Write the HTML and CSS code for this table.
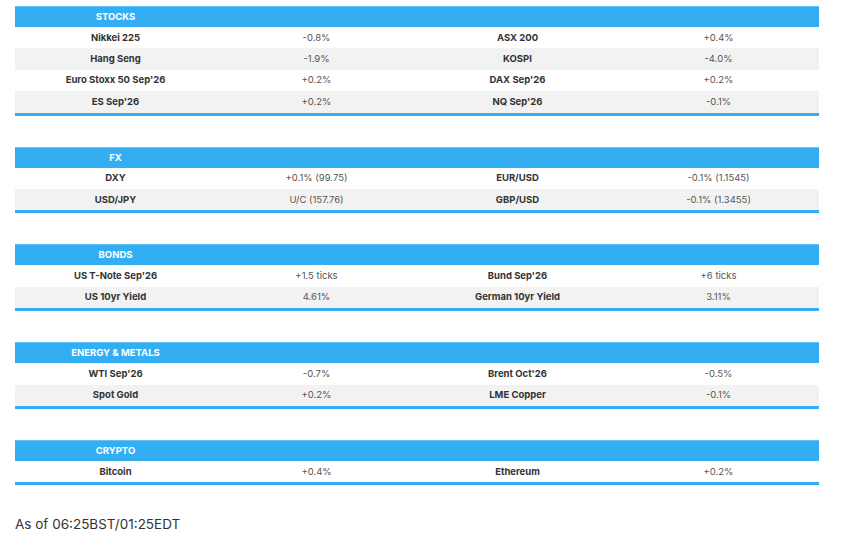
FILE: index.html
```html
<!DOCTYPE html>
<html>
<head>
<meta charset="utf-8">
<link rel="stylesheet" href="styles.css">
</head>
<body>
<div class="page">
  <table class="mkt">
    <tr class="head"><th>STOCKS</th><th></th><th></th><th></th></tr>
    <tr><td class="lbl">Nikkei 225</td><td class="val">-0.8%</td><td class="lbl">ASX 200</td><td class="val">+0.4%</td></tr>
    <tr class="alt"><td class="lbl">Hang Seng</td><td class="val">-1.9%</td><td class="lbl">KOSPI</td><td class="val">-4.0%</td></tr>
    <tr><td class="lbl">Euro Stoxx 50 Sep'26</td><td class="val">+0.2%</td><td class="lbl">DAX Sep'26</td><td class="val">+0.2%</td></tr>
    <tr class="alt last"><td class="lbl">ES Sep'26</td><td class="val">+0.2%</td><td class="lbl">NQ Sep'26</td><td class="val">-0.1%</td></tr>
  </table>

  <table class="mkt">
    <tr class="head"><th>FX</th><th></th><th></th><th></th></tr>
    <tr><td class="lbl">DXY</td><td class="val">+0.1% (99.75)</td><td class="lbl">EUR/USD</td><td class="val">-0.1% (1.1545)</td></tr>
    <tr class="alt last"><td class="lbl">USD/JPY</td><td class="val">U/C (157.76)</td><td class="lbl">GBP/USD</td><td class="val">-0.1% (1.3455)</td></tr>
  </table>

  <table class="mkt">
    <tr class="head"><th>BONDS</th><th></th><th></th><th></th></tr>
    <tr><td class="lbl">US T-Note Sep'26</td><td class="val">+1.5 ticks</td><td class="lbl">Bund Sep'26</td><td class="val">+6 ticks</td></tr>
    <tr class="alt last"><td class="lbl">US 10yr Yield</td><td class="val">4.61%</td><td class="lbl">German 10yr Yield</td><td class="val">3.11%</td></tr>
  </table>

  <table class="mkt">
    <tr class="head"><th>ENERGY &amp; METALS</th><th></th><th></th><th></th></tr>
    <tr><td class="lbl">WTI Sep'26</td><td class="val">-0.7%</td><td class="lbl">Brent Oct'26</td><td class="val">-0.5%</td></tr>
    <tr class="alt last"><td class="lbl">Spot Gold</td><td class="val">+0.2%</td><td class="lbl">LME Copper</td><td class="val">-0.1%</td></tr>
  </table>

  <table class="mkt">
    <tr class="head"><th>CRYPTO</th><th></th><th></th><th></th></tr>
    <tr class="last"><td class="lbl">Bitcoin</td><td class="val">+0.4%</td><td class="lbl">Ethereum</td><td class="val">+0.2%</td></tr>
  </table>

  <p class="asof">As of 06:25BST/01:25EDT</p>
</div>
</body>
</html>
```

FILE: styles.css
```css
html, body {
  margin: 0;
  padding: 0;
  background: #ffffff;
}

.page {
  padding: 6px 0 0 15px;
  font-family: Inter, "Noto Sans", sans-serif;
}

.mkt {
  width: 804px;
  border-collapse: separate;
  border-spacing: 0;
  table-layout: fixed;
  margin: 0 0 31px 0;
  font-size: 9.5px;
}

.mkt th,
.mkt td {
  width: 25%;
  padding: 0;
  text-align: center;
  vertical-align: middle;
  line-height: 12px;
}

.mkt .head th {
  background: #33aef3;
  color: #ffffff;
  font-weight: 700;
  height: 20px;
  border-top: 1px solid #62c1f5;
}

.mkt td {
  height: 21.4px;
}

.mkt tr.alt td {
  background: #f2f2f2;
}

.mkt tr.last td {
  border-bottom: 3px solid #33aef3;
}

.lbl {
  font-weight: 700;
  color: #333333;
}

.val {
  color: #555555;
}

.asof {
  margin: 1px 0 0 0;
  font-size: 13.5px;
  line-height: 16px;
  color: #333333;
}
```
